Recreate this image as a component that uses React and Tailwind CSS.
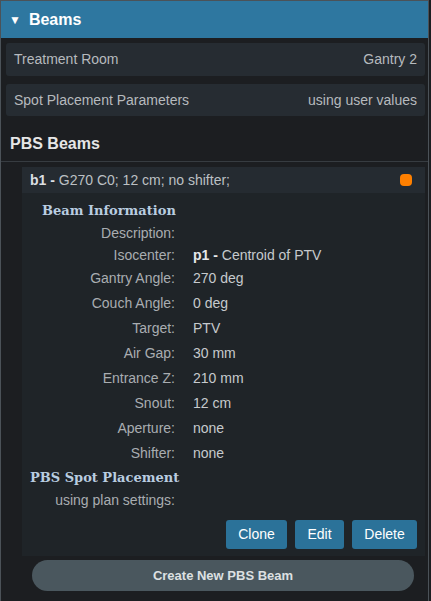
import React from 'react';

const rows = [
  { label: 'Gantry Angle:', value: '270 deg' },
  { label: 'Couch Angle:', value: '0 deg' },
  { label: 'Target:', value: 'PTV' },
  { label: 'Air Gap:', value: '30 mm' },
  { label: 'Entrance Z:', value: '210 mm' },
  { label: 'Snout:', value: '12 cm' },
  { label: 'Aperture:', value: 'none' },
  { label: 'Shifter:', value: 'none' },
];

const serif = { fontFamily: "'DejaVu Serif', Georgia, serif" };

function InfoRow({ label, children, h = 'h-[25px]' }) {
  return (
    <div className={`flex items-center ${h}`}>
      <div className="w-[153px] text-right text-[#a9adb1]">{label}</div>
      <div className="ml-[18px] text-[#c6cacd]">{children}</div>
    </div>
  );
}

export default function App() {
  return (
    <div
      className="w-[431px] h-[601px] bg-[#1c1e21] overflow-hidden text-[14px]"
      style={{ fontFamily: "'Liberation Sans', Arial, sans-serif" }}
    >
      <div className="w-[429px] h-[601px] border-x border-t border-[#4b5258] flex flex-col">
        <div className="h-[37px] bg-[#2e77a0] flex items-center pl-[8px] gap-[8px] text-white">
          <span className="text-[12px] leading-none">▼</span>
          <span className="text-[16px] font-bold">Beams</span>
        </div>

        <div className="pl-[5px] pr-[3px] pt-[5px] flex flex-col gap-[8px]">
          <div className="h-[33px] bg-[#262c32] rounded-[3px] flex items-center justify-between px-[8px] text-[#b6babe]">
            <span>Treatment Room</span>
            <span>Gantry 2</span>
          </div>
          <div className="h-[32px] bg-[#262c32] rounded-[3px] flex items-center justify-between px-[8px] text-[#b6babe]">
            <span>Spot Placement Parameters</span>
            <span>using user values</span>
          </div>
        </div>

        <div className="mt-[15px] h-[31px] pl-[9px] pb-[4px] flex items-center text-[16px] font-bold text-[#e6e6e6] border-b border-[#373c41]">
          PBS Beams
        </div>

        <div className="ml-[21px] mr-[3px] mt-[5px]">
          <div className="h-[26px] bg-[#252b31] flex items-center justify-between pl-[8px] pr-[13px]">
            <span className="text-[#bcc0c4]">
              <span className="font-bold text-[#dcdfe2]">b1 - </span>G270 C0; 12 cm; no shifter;
            </span>
            <span className="w-[12px] h-[12px] rounded-[4px] bg-[#ff8000]"></span>
          </div>
          <div className="bg-[#1f2428] pt-[5px] pb-[7px] flex flex-col">
            <div className="h-[25px] flex items-center pl-[20px] text-[13px] font-bold text-[#b9cde0]" style={serif}>
              Beam Information
            </div>
            <InfoRow label="Description:" h="h-[21px]" />
            <InfoRow label="Isocenter:" h="h-[22px]">
              <span className="font-bold text-[#e6e8ea]">p1 - </span>Centroid of PTV
            </InfoRow>
            {rows.map((r) => (
              <InfoRow key={r.label} label={r.label}>
                {r.value}
              </InfoRow>
            ))}
            <div className="h-[24px] flex items-center pl-[8px] text-[13px] font-bold text-[#b9cde0]" style={serif}>
              PBS Spot Placement
            </div>
            <InfoRow label="using plan settings:" h="h-[20px]" />
            <div className="mt-[10px] flex justify-end gap-[8px] pr-[8px]">
              <button className="h-[29px] w-[61px] rounded-[3px] bg-[#2b7299] text-white">Clone</button>
              <button className="h-[29px] w-[49px] rounded-[3px] bg-[#2b7299] text-white">Edit</button>
              <button className="h-[29px] w-[65px] rounded-[3px] bg-[#2b7299] text-white">Delete</button>
            </div>
          </div>
        </div>

        <div className="ml-[31px] mr-[14px] mt-[4px]">
          <button className="w-full h-[31px] rounded-full bg-[#4a575e] text-[13px] font-bold text-[#dde0e2]">
            Create New PBS Beam
          </button>
        </div>
      </div>
    </div>
  );
}
